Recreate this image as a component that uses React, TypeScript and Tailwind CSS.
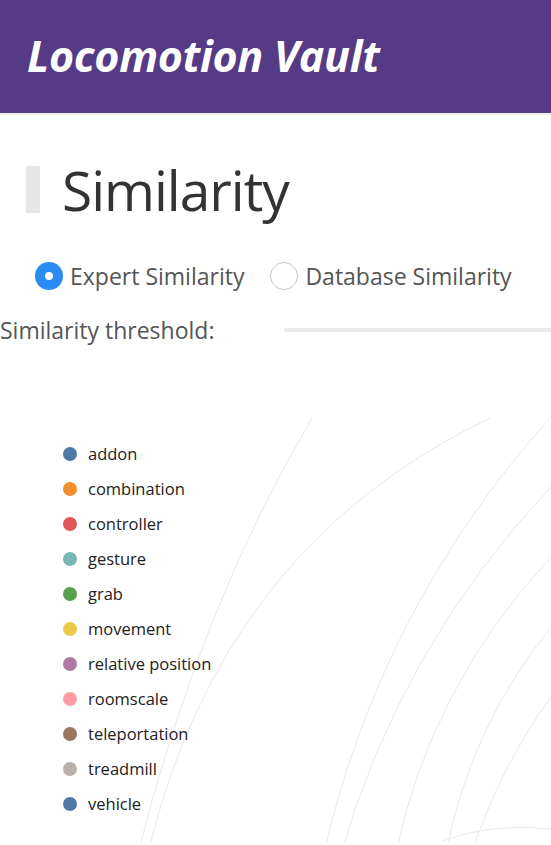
const LEGEND = [
  { name: "addon", color: "#4e79a7" },
  { name: "combination", color: "#f28e2c" },
  { name: "controller", color: "#e15759" },
  { name: "gesture", color: "#76b7b2" },
  { name: "grab", color: "#59a14f" },
  { name: "movement", color: "#edc949" },
  { name: "relative position", color: "#af7aa1" },
  { name: "roomscale", color: "#ff9da7" },
  { name: "teleportation", color: "#9c755f" },
  { name: "treadmill", color: "#bab0ab" },
  { name: "vehicle", color: "#4e79a7" },
];

// faint links of the similarity graph
const LINKS = [
  "M312 71 Q 200 260 137 510",
  "M490 71 Q 220 200 147 510",
  "M551 70 Q 380 260 323 510",
  "M551 140 Q 400 300 340 510",
  "M551 210 Q 430 340 395 510",
  "M551 280 Q 470 380 445 510",
  "M551 350 Q 500 420 470 510",
  "M430 500 Q 480 475 551 482",
];

function Radio({ label, checked }: { label: string; checked?: boolean }) {
  return (
    <label className="flex items-center gap-[7px]">
      {checked ? (
        <span className="flex h-[28px] w-[28px] items-center justify-center rounded-full bg-[#2a8bf2]">
          <span className="h-[8px] w-[8px] rounded-full bg-white" />
        </span>
      ) : (
        <span className="h-[28px] w-[28px] rounded-full border border-[#c8c8c8] bg-white" />
      )}
      <span className="text-[23px] text-[#555]">{label}</span>
    </label>
  );
}

export default function App() {
  return (
    <div className="h-[845px] w-[551px] overflow-hidden bg-white font-['Open_Sans',sans-serif]">
      <header className="flex h-[115px] items-center border-b-2 border-[#eeeeee] bg-[#553a85] px-[27px]">
        <h1 className="text-[43px] font-bold italic tracking-[-0.3px] text-white">Locomotion Vault</h1>
      </header>

      <div className="mt-[51px] ml-[26px] flex h-[47px] items-center border-l-[14px] border-[#e6e6e6] pl-[22px]">
        <h2 className="text-[55px] leading-none tracking-[-1px] text-[#333]">Similarity</h2>
      </div>

      <div className="mt-[46px] ml-[35px] flex gap-[26px]">
        <Radio label="Expert Similarity" checked />
        <Radio label="Database Similarity" />
      </div>

      <div className="mt-[19px] flex items-center">
        <span className="w-[284px] text-[23px] text-[#555]">Similarity threshold:</span>
        <div className="h-[4px] flex-1 rounded-l bg-[#eaeaea]" />
      </div>

      <div className="relative h-[495px]">
        <svg className="h-full w-full" viewBox="0 0 551 495" fill="none">
          {LINKS.map((d, i) => (
            <path key={i} d={d} stroke="#e8e8e8" strokeWidth="1" />
          ))}
        </svg>
        <ul className="absolute left-[63px] top-[96px] flex flex-col gap-[13px]">
          {LEGEND.map((item) => (
            <li key={item.name} className="flex h-[22px] items-center gap-[11px]">
              <span className="h-[14px] w-[14px] rounded-full" style={{ backgroundColor: item.color }} />
              <span className="text-[16.5px] text-[#222]">{item.name}</span>
            </li>
          ))}
        </ul>
      </div>
    </div>
  );
}
